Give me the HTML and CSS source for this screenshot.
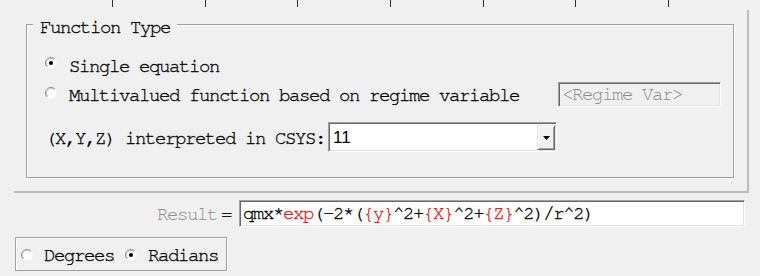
FILE: index.html
```html
<!DOCTYPE html>
<html lang="en">
  <head>
    <meta charset="utf-8" />
    <title>Function Type</title>
    <link rel="stylesheet" href="styles.css">
  </head>
  <body>
    <div class="ruler">
      <span class="tick"></span><span class="tick"></span><span class="tick"></span><span class="tick"></span><span class="tick"></span><span class="tick"></span><span class="tick"></span>
    </div>

    <div class="panel">
      <div class="group">
        <div class="group-title">Function Type</div>

        <div class="row row-single">
          <svg class="radio" viewBox="0 0 12 12" width="12" height="12">
            <circle cx="6" cy="6" r="5.5" fill="#fff" />
            <path d="M2.1 9.9A5.5 5.5 0 0 1 9.9 2.1" fill="none" stroke="#8f8f8f" />
            <path d="M2.8 9.2A4.5 4.5 0 0 1 9.2 2.8" fill="none" stroke="#c0c0c0" />
            <circle cx="6" cy="6" r="2" fill="#000" />
          </svg>
          <span>Single equation</span>
        </div>

        <div class="row row-multi">
          <svg class="radio" viewBox="0 0 12 12" width="12" height="12">
            <circle cx="6" cy="6" r="5.5" fill="#fff" />
            <path d="M2.1 9.9A5.5 5.5 0 0 1 9.9 2.1" fill="none" stroke="#8f8f8f" />
            <path d="M2.8 9.2A4.5 4.5 0 0 1 9.2 2.8" fill="none" stroke="#c0c0c0" />
          </svg>
          <span class="label">Multivalued function based on regime variable</span>
          <div class="field field-disabled">&lt;Regime Var&gt;</div>
        </div>

        <div class="row row-csys">
          <span class="label">(X,Y,Z) interpreted in CSYS:</span>
          <div class="combo">
            <span class="combo-value">11</span>
            <span class="combo-btn">
              <svg viewBox="0 0 7 4" width="7" height="4"><path d="M0 0H7L3.5 4Z" fill="#000" /></svg>
            </span>
          </div>
        </div>
      </div>
    </div>

    <div class="result-row">
      <span class="result-label">Result</span>
      <span class="result-eq">=</span>
      <div class="field result-field">qmx*<span class="hl">exp</span>(-2*(<span class="hl">{y}</span>^2+<span class="hl">{X}</span>^2+<span class="hl">{Z}</span>^2)/r^2)</div>
    </div>

    <div class="units">
      <svg class="radio" viewBox="0 0 12 12" width="12" height="12">
        <circle cx="6" cy="6" r="5.5" fill="#fff" />
        <path d="M2.1 9.9A5.5 5.5 0 0 1 9.9 2.1" fill="none" stroke="#8f8f8f" />
        <path d="M2.8 9.2A4.5 4.5 0 0 1 9.2 2.8" fill="none" stroke="#c0c0c0" />
      </svg>
      <span class="unit-label">Degrees</span>
      <svg class="radio" viewBox="0 0 12 12" width="12" height="12">
        <circle cx="6" cy="6" r="5.5" fill="#fff" />
        <path d="M2.1 9.9A5.5 5.5 0 0 1 9.9 2.1" fill="none" stroke="#8f8f8f" />
        <path d="M2.8 9.2A4.5 4.5 0 0 1 9.2 2.8" fill="none" stroke="#c0c0c0" />
        <circle cx="6" cy="6" r="2" fill="#000" />
      </svg>
      <span class="unit-label">Radians</span>
    </div>
  </body>
</html>
```

FILE: styles.css
```css
body {
  margin: 0;
  background: #f0f0f0;
  color: #000;
  font-family: "Nimbus Mono PS", "FreeMono", "Courier 10 Pitch", "Liberation Mono", monospace;
  font-size: 19px;
  letter-spacing: -1.4px;
  line-height: 20px;
  -webkit-text-stroke: 0.3px;
}

/* ticks of the control above, cut off by the screenshot */
.ruler {
  display: flex;
  height: 10px;
  padding-left: 112px;
}
.ruler .tick {
  flex: none;
  width: 92.67px;
  height: 7px;
  box-sizing: border-box;
  border-left: 1px solid #303030;
}

.panel {
  width: 708px;
  margin-left: 14px;
  padding: 14px 13px 13px 12px;
  border-right: 2px solid #bcbcbc;
  border-bottom: 2px solid #bcbcbc;
}

.group {
  display: flex;
  flex-direction: column;
  padding: 0 0 25px 18px;
  border: 1px solid #a0a0a0;
  box-shadow: inset 1px 1px 0 #fff, 1px 1px 0 #fff;
}
.group-title {
  align-self: flex-start;
  margin: -7px 0 0 -12px;
  padding: 0 7px;
  background: #f0f0f0;
}

.row {
  display: flex;
  align-items: flex-start;
  white-space: pre;
}
.radio {
  flex: none;
  margin-top: 0;
  margin-right: 12px;
}
.row-single {
  margin-top: 19px;
}
.row-multi {
  margin-top: 5px;
}
.row-multi .radio {
  margin-top: 5px;
}
.row-multi .label {
  margin-top: 4px;
}
.row-csys {
  margin-top: 15px;
}
.row-csys .label {
  margin-top: 7px;
}

/* sunken 3d edit box */
.field {
  box-sizing: border-box;
  background: #fff;
  border: 1px solid;
  border-color: #a0a0a0 #fff #fff #a0a0a0;
  box-shadow: inset 1px 1px 0 #696969, inset -1px -1px 0 #e3e3e3;
  white-space: pre;
}
.field-disabled {
  width: 163px;
  height: 25px;
  margin-left: 39px;
  padding: 2px 0 0 3px;
  background: #f0f0f0;
  color: #8a8a8a;
  -webkit-text-stroke: 0;
}

.combo {
  display: flex;
  align-items: flex-start;
  box-sizing: border-box;
  width: 229px;
  height: 30px;
  margin-left: 3px;
  padding: 1px;
  background: #fff;
  border: 1px solid;
  border-color: #a0a0a0 #fff #fff #a0a0a0;
  box-shadow: inset 1px 1px 0 #696969, inset -1px -1px 0 #e3e3e3;
}
.combo-value {
  flex: 1;
  padding: 4px 0 0 3px;
  font-family: "Liberation Sans", Arial, sans-serif;
  font-size: 17px;
  letter-spacing: 0;
  -webkit-text-stroke: 0;
}
.combo-btn {
  display: flex;
  align-items: center;
  justify-content: center;
  box-sizing: border-box;
  width: 18px;
  height: 25px;
  margin-top: 1px;
  background: #f0f0f0;
  border: 1px solid;
  border-color: #e3e3e3 #696969 #696969 #e3e3e3;
  box-shadow: inset 1px 1px 0 #fff, inset -1px -1px 0 #a0a0a0;
}

.result-row {
  display: flex;
  align-items: flex-start;
  margin-top: 7px;
  padding-left: 157px;
}
.result-label {
  margin-top: 5px;
  color: #8c8c8c;
  -webkit-text-stroke: 0;
}
.result-eq {
  margin: 5px 0 0 4px;
}
.result-field {
  width: 506px;
  height: 27px;
  margin-left: 8px;
  padding: 3px 0 0 3px;
}
.result-field .hl {
  color: #d42424;
}

.units {
  display: flex;
  align-items: flex-start;
  width: fit-content;
  margin: 10px 0 0 15px;
  padding: 8px 8px 4px 5px;
  border: 1px solid #a0a0a0;
  box-shadow: inset 1px 1px 0 #fff, 1px 1px 0 #fff;
}
.units .radio {
  margin-top: 3px;
  margin-right: 11px;
}
.units .unit-label {
  margin-right: 11px;
}
.units .unit-label:last-child {
  margin-right: 0;
}
```
